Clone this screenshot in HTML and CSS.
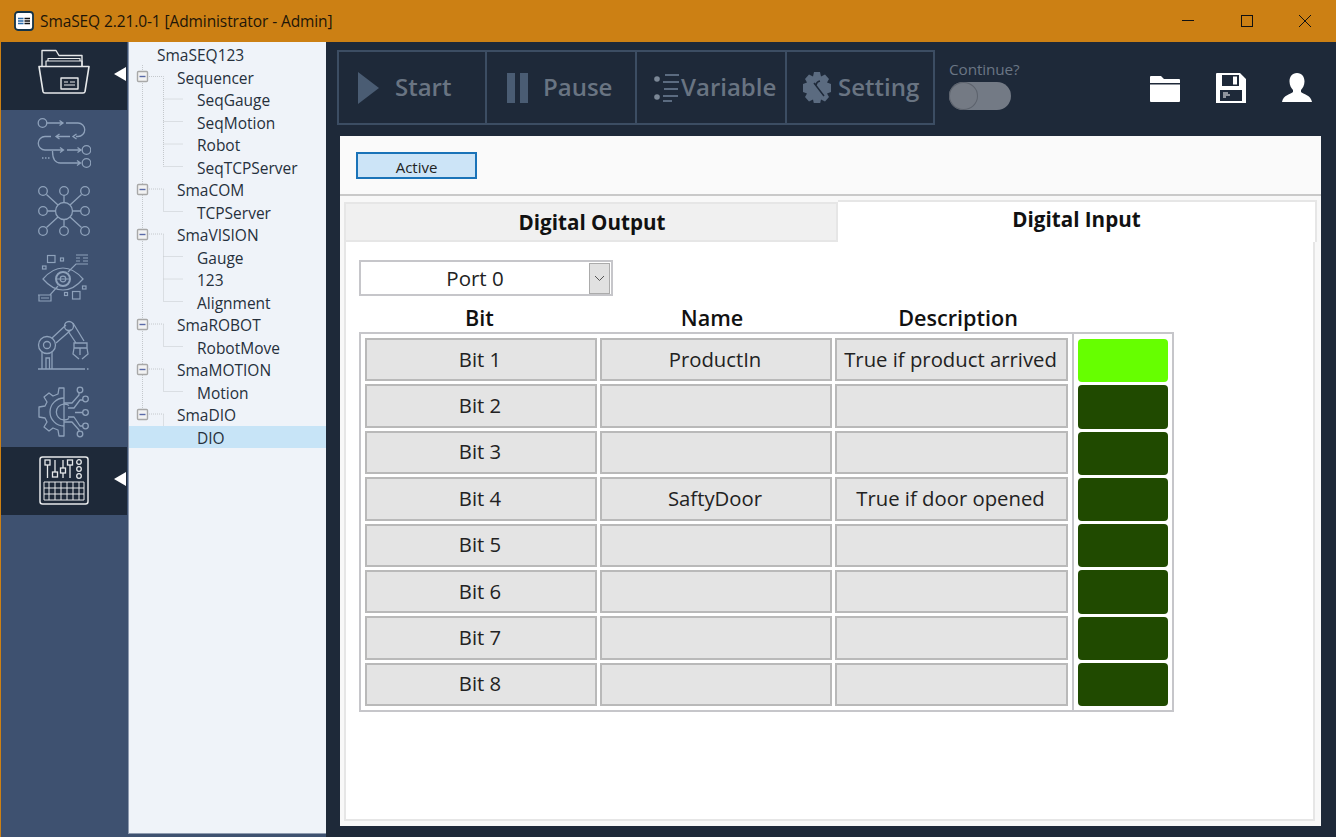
FILE: index.html
```html
<!DOCTYPE html>
<html lang="en">
<head>
<meta charset="utf-8">
<title>SmaSEQ</title>
<link rel="stylesheet" href="styles.css">
</head>
<body>
<div class="window">
  <header class="titlebar">
    <svg class="app-icon" viewBox="0 0 20 20" width="20" height="20"><rect x="1" y="1" width="18" height="18" rx="3" fill="#fff" stroke="#123349" stroke-width="1.8"/><path d="M4 7.500h5.500M4 10h5.500M4 12.500h5.500" stroke="#2a6aa8" stroke-width="1.400"/><path d="M10.500 7.500H16M10.500 10H16M10.500 12.500H16" stroke="#111" stroke-width="1.400"/></svg>
    <span class="title-text">SmaSEQ 2.21.0-1 [Administrator - Admin]</span>
    <div class="win-controls">
      <svg width="12" height="12" viewBox="0 0 12 12"><path d="M0 5.500h12" stroke="#111"/></svg>
      <svg width="12" height="12" viewBox="0 0 12 12"><rect x=".5" y=".5" width="11" height="11" fill="none" stroke="#111"/></svg>
      <svg width="12" height="12" viewBox="0 0 12 12"><path d="M0 0l12 12M12 0L0 12" stroke="#111"/></svg>
    </div>
  </header>
  <div class="body">
    <div class="left">
    <nav class="sidebar">
      <div class="side-item active">
        <svg class="side-icon" viewBox="0 0 54 54" width="54" height="54" fill="none" stroke="#e6e8ea" stroke-width="1.4" stroke-linejoin="round">
          <path d="M5 17V1.500h14l3 5h23v10.500"/>
          <path d="M2 17.500h50l-4 25a2 2 0 0 1-2 1.500H8a2 2 0 0 1-2-1.500z" stroke-width="1.6"/>
          <path d="M9 17v-5h36v5M11 12V9.500h32V12" stroke-width="1.2"/>
          <rect x="24" y="29" width="17" height="11" stroke-width="1.4"/>
          <path d="M27 33h4M33 33h5M27 36h11" stroke-width="1.2"/>
        </svg>
      </div>
      <div class="side-item">
        <svg class="side-icon" viewBox="0 -2 54 54" width="54" height="54" fill="none" stroke="#8ea1ba" stroke-width="1.3">
          <circle cx="5.500" cy="5" r="4.300"/>
          <path d="M10 5h16M22.500 2.500L26 5l-3.500 2.500M29 5h12a6.500 6.500 0 0 1 0 13.500h-2M39.500 16L36 18.500l3.500 2.500M33 18.500H19M22.500 16L19 18.500l3.500 2.500M14 18.500H8a6.500 6.500 0 0 0 0 13.500h18M23 29.500l3.500 2.500-3.500 2.500M30 32h13.500M40.500 29.500l3.500 2.500-3.500 2.500M15.500 33c0 8 3 12 8 12H43M40 42.500l3.500 2.500-3.500 2.500"/>
          <circle cx="49.500" cy="32" r="4.300"/>
          <circle cx="49.500" cy="45" r="4.300"/>
          <path d="M5 40h8" stroke-dasharray="1.500 1.500"/>
        </svg>
      </div>
      <div class="side-item">
        <svg class="side-icon" viewBox="0 0 54 54" width="54" height="54" fill="none" stroke="#8ea1ba" stroke-width="1.3">
          <circle cx="27" cy="27" r="8.500"/>
          <circle cx="6" cy="7" r="4.300"/><circle cx="27" cy="7" r="4.300"/><circle cx="48" cy="7" r="4.300"/>
          <circle cx="6" cy="27" r="4.300"/><circle cx="48" cy="27" r="4.300"/>
          <circle cx="6" cy="47" r="4.300"/><circle cx="27" cy="47" r="4.300"/><circle cx="48" cy="47" r="4.300"/>
          <path d="M9.500 10.500l11.500 10.500M27 11.500v7M44.500 10.500L33 21M10.500 27h8M35.500 27h8M9.500 43.500L21 33M27 35.500v7M44.500 43.500L33 33"/>
        </svg>
      </div>
      <div class="side-item">
        <svg class="side-icon" viewBox="37 251 54 54" width="54" height="54" fill="none" stroke="#8ea1ba" stroke-width="1.2">
          <rect x="47.500" y="255.500" width="7.500" height="7"/>
          <rect x="60.500" y="258" width="3" height="3"/>
          <rect x="42.500" y="266" width="3.500" height="3"/>
          <path d="M43 279c6-7 13-11 20-11s14 4 20 11c-6 7-13 11-20 11s-14-4-20-11z"/>
          <circle cx="63" cy="279" r="7" stroke-width="2"/>
          <circle cx="63" cy="279" r="2.800"/>
          <path d="M56 279h14M68 272l8-8h12M76 255h12M76 258h4M83 258h5M76 261h4M83 261h5M58 286l-8 9H38M39 295h12v6H39zM41 298h8"/>
          <rect x="72.500" y="291.500" width="7.500" height="7.500"/>
          <rect x="64.500" y="292.500" width="3" height="3"/>
          <rect x="82.500" y="286" width="3.500" height="3"/>
        </svg>
      </div>
      <div class="side-item">
        <svg class="side-icon" viewBox="37 319 54 54" width="54" height="54" fill="none" stroke="#8ea1ba" stroke-width="1.3">
          <circle cx="47" cy="345" r="8.500"/><circle cx="47" cy="345" r="3.500"/>
          <path d="M42 352v17M52 352v17M38 369h47M87 369h1.500M46 369v-11h3.500v11"/>
          <path d="M52 338l14-13M56 343l15-13"/>
          <circle cx="69" cy="326" r="4.500"/>
          <path d="M73 323l11 18M68 331l8 12M74 343h13v5H74zM74 348l-1 6 6 5M87 348l1 6-6 5M80 348v7"/>
        </svg>
      </div>
      <div class="side-item">
        <svg class="side-icon" viewBox="37 386 54 54" width="54" height="54" fill="none" stroke="#8ea1ba" stroke-width="1.3" stroke-linejoin="round">
          <path d="M64 388h-5l-1 6-5 2-4-3-5 4 3 5-2 4-6 1v10l6 1 2 4-3 5 5 4 4-3 5 2 1 6h5z"/>
          <path d="M64 398a14 14 0 0 0 0 28"/>
          <path d="M69 405.500a8 8 0 1 0 0 13"/>
          <path d="M64 403h8l7-8v-2.500M68 408h6l6-8h3M75 412.500h8M68 417h6l6 9h3M64 422h8l7 8v1"/>
          <circle cx="80" cy="390" r="2.800"/><circle cx="85.500" cy="399" r="2.800"/><circle cx="85.500" cy="412.500" r="2.800"/><circle cx="85.500" cy="426" r="2.800"/><circle cx="80" cy="434" r="2.800"/>
        </svg>
      </div>
      <div class="side-item active">
        <svg class="side-icon" viewBox="0 0 54 54" width="54" height="54" fill="none" stroke="#e6e8ea" stroke-width="1.3">
          <rect x="3" y="3" width="48" height="47" rx="2.500" stroke-width="1.5"/>
          <rect x="8" y="6" width="5" height="5"/><path d="M10.500 11v13"/>
          <path d="M18 6v12"/><rect x="15.500" y="18" width="5" height="5"/>
          <path d="M26 6v8M26 19v5"/><rect x="23.500" y="14" width="5" height="5"/>
          <path d="M33 11v13"/><rect x="30.500" y="6" width="5" height="5"/>
          <circle cx="42" cy="8" r="2.300"/><circle cx="42" cy="15" r="2.300"/><circle cx="42" cy="22" r="2.300"/>
          <path d="M7 28h40v18H7zM7 34h40M7 40h40M12 28v18M18 28v18M24 28v18M30 28v18M36 28v18M42 28v18" stroke-width="1"/>
        </svg>
      </div>
    </nav>
    <aside class="tree">
      <svg class="tree-lines" width="197" height="400" viewBox="129 42 197 400">
        <g fill="none" stroke="#c4c8cc" stroke-dasharray="1 1">
          <path d="M142.500 65V415M147 76.500h16.500V166.500M163.500 99h19.500M163.500 121.500h19.500M163.500 144h19.500M163.500 166.500h19.500"/>
          <path d="M147 189h16.500V211.500h19.500M147 234h16.500V301.500M163.500 256.500h19.500M163.500 279h19.500M163.500 301.500h19.500"/>
          <path d="M147 324h16.500V346.500h19.500M147 369h16.500V391.500h19.500M147 414h16.500V436.500h19.500"/>
        </g>
        <g class="exp">
          <rect x="137.500" y="71.500" width="10" height="10" rx="1"/><path d="M139.500 76.500h6"/>
          <rect x="137.500" y="184.500" width="10" height="10" rx="1"/><path d="M139.500 189.500h6"/>
          <rect x="137.500" y="229.500" width="10" height="10" rx="1"/><path d="M139.500 234.500h6"/>
          <rect x="137.500" y="319.500" width="10" height="10" rx="1"/><path d="M139.500 324.500h6"/>
          <rect x="137.500" y="364.500" width="10" height="10" rx="1"/><path d="M139.500 369.500h6"/>
          <rect x="137.500" y="409.500" width="10" height="10" rx="1"/><path d="M139.500 414.500h6"/>
        </g>
      </svg>
      <div class="node l0">SmaSEQ123</div>
      <div class="node l1">Sequencer</div>
      <div class="node l2">SeqGauge</div>
      <div class="node l2">SeqMotion</div>
      <div class="node l2">Robot</div>
      <div class="node l2">SeqTCPServer</div>
      <div class="node l1">SmaCOM</div>
      <div class="node l2">TCPServer</div>
      <div class="node l1">SmaVISION</div>
      <div class="node l2">Gauge</div>
      <div class="node l2">123</div>
      <div class="node l2">Alignment</div>
      <div class="node l1">SmaROBOT</div>
      <div class="node l2">RobotMove</div>
      <div class="node l1">SmaMOTION</div>
      <div class="node l2">Motion</div>
      <div class="node l1">SmaDIO</div>
      <div class="node l2 selected">DIO</div>
    </aside>
    </div>
    <main class="content">
      <div class="topbar">
        <div class="tools">
          <div class="tool t1">
            <svg width="22" height="32" viewBox="0 0 22 32"><path d="M0 0l21 16L0 32z" fill="#4a5c73"/></svg>
            <span>Start</span>
          </div>
          <div class="tool t2">
            <svg width="21" height="30" viewBox="0 0 21 30"><path d="M0 0h8v30H0zM13 0h8v30h-8z" fill="#4a5c73"/></svg>
            <span>Pause</span>
          </div>
          <div class="tool t3">
            <svg width="27" height="30" viewBox="0 0 27 30" fill="none" stroke="#5b6b80" stroke-width="2"><circle cx="3" cy="6" r="2.800" fill="#7b8796" stroke="none"/><circle cx="3" cy="24" r="2.800" fill="#7b8796" stroke="none"/><path d="M11 2h14M9 9h16M10 16h14M9 23h15M9 28h9"/></svg>
            <span>Variable</span>
          </div>
          <div class="tool t4">
            <svg width="28" height="31" viewBox="0 0 28 31"><path fill="#5b6b80" d="M11 0h6l1 4.500 4-2 4 4.500-2 3.500 4 1.500v8l-4 1.500 2 3.500-4 4.500-4-2-1 4.500h-6l-1-4.500-4 2-4-4.500 2-3.500-4-1.500v-8l4-1.500-2-3.500 4-4.500 4 2z"/><path d="M11 11l10 13M17 9a5 5 0 0 0-4 4" stroke="#1e2939" stroke-width="1.500" fill="none"/></svg>
            <span>Setting</span>
          </div>
        </div>
        <div class="continue">
          <span class="continue-label">Continue?</span>
          <div class="toggle"><div class="knob"></div></div>
        </div>
        <div class="actions">
          <svg width="30" height="30" viewBox="0 0 30 30"><path fill="#fff" d="M0 4a1 1 0 0 1 1-1h10l3 3h15a1 1 0 0 1 1 1v3H0zM0 11.500h30V28a1 1 0 0 1-1 1H1a1 1 0 0 1-1-1z"/></svg>
          <svg width="30" height="30" viewBox="0 0 30 30"><path fill="#fff" fill-rule="evenodd" d="M1 0h23l6 6v24H0V1a1 1 0 0 1 1-1zM6 2v11h17V2zM17 3.500h4v8h-4zM4 17v11h22V17z"/><path d="M7 20h5M7 22h7M7 24h3" stroke="#fff" stroke-width="1"/></svg>
          <svg width="30" height="30" viewBox="0 0 30 30"><path fill="#fff" d="M15 0c5 0 7.500 4 7.500 8.500 0 4-2 7-3.500 8.500v2c2 2 10 3 11 10H0c1-7 9-8 11-10v-2c-1.500-1.500-3.500-4.500-3.500-8.500C7.500 4 10 0 15 0z"/></svg>
        </div>
      </div>
      <section class="panel">
        <div class="panel-head"><button class="active-btn">Active</button></div>
        <div class="panel-body">
          <div class="tabs">
            <div class="tab">Digital Output</div>
            <div class="tab current">Digital Input</div>
          </div>
          <div class="tab-content">
            <div class="combo">
              <span class="combo-text">Port 0</span>
              <span class="combo-btn"><svg width="11" height="7" viewBox="0 0 11 7"><path d="M1 1l4.500 4.500L10 1" fill="none" stroke="#555"/></svg></span>
            </div>
            <div class="col-heads"><span>Bit</span><span>Name</span><span>Description</span></div>
            <div class="io-table">
              <div class="cells">
                <div class="cell">Bit 1</div><div class="cell">ProductIn</div><div class="cell">True if product arrived</div>
                <div class="cell">Bit 2</div><div class="cell"></div><div class="cell"></div>
                <div class="cell">Bit 3</div><div class="cell"></div><div class="cell"></div>
                <div class="cell">Bit 4</div><div class="cell">SaftyDoor</div><div class="cell">True if door opened</div>
                <div class="cell">Bit 5</div><div class="cell"></div><div class="cell"></div>
                <div class="cell">Bit 6</div><div class="cell"></div><div class="cell"></div>
                <div class="cell">Bit 7</div><div class="cell"></div><div class="cell"></div>
                <div class="cell">Bit 8</div><div class="cell"></div><div class="cell"></div>
              </div>
              <div class="leds">
                <div class="led on"></div><div class="led"></div><div class="led"></div><div class="led"></div>
                <div class="led"></div><div class="led"></div><div class="led"></div><div class="led"></div>
              </div>
            </div>
          </div>
        </div>
      </section>
    </main>
  </div>
</div>
</body>
</html>
```
FILE: styles.css
```css
* { box-sizing: border-box; }
html, body { margin: 0; height: 100%; }
body { font-family: "Open Sans", "Noto Sans", sans-serif; color: #1c1c1c; overflow: hidden; }
.window { width: 1336px; height: 837px; display: flex; flex-direction: column; background: #1e2939; }

.titlebar { height: 42px; flex: none; background: #cc8014; display: flex; align-items: center; padding-left: 14px; }
.app-icon { margin-right: 6px; }
.title-text { font-size: 15.5px; color: #1d1508; white-space: nowrap; letter-spacing: -.1px; }
.win-controls { margin-left: auto; display: flex; gap: 46.5px; padding-right: 25px; }

.body { flex: 1; display: flex; min-height: 0; }
.left { width: 326px; flex: none; display: flex; background: #3e5170; border-left: 1px solid #cc8014; }

.sidebar { width: 126px; flex: none; }
.side-item { height: 67.5px; display: flex; align-items: center; justify-content: center; position: relative; }
.side-item.active { background: #1e2939; }
.side-item.active::after { content: ""; position: absolute; right: 1px; top: 50%; margin-top: -9px; border-style: solid; border-width: 7.500px 12px 7.500px 0; border-color: transparent #fff transparent transparent; }

.tree { width: 198px; flex: none; margin: 0 0 3px 1px; background: #eff3f9; border-left: 1px solid #8e9bb0; border-bottom: 1px solid #8e9bb0; padding-top: 1px; font-size: 15.5px; color: #26303c; position: relative; }
.tree-lines { position: absolute; left: 0; top: 0; }
.exp rect { fill: #f2f2f2; stroke: #a8a8a8; stroke-width: 1.400; }
.exp path { stroke: #5a6aa8; fill: none; stroke-width: 1.400; }
.node { height: 22.5px; line-height: 24px; white-space: nowrap; position: relative; }
.l0 { padding-left: 28px; }
.l1 { padding-left: 48px; }
.l2 { padding-left: 68px; }
.selected { background: #c7e4f7; }

.content { flex: 1; min-width: 0; display: flex; flex-direction: column; padding: 0 15px 11px 14px; }

.topbar { height: 94px; flex: none; display: flex; }
.tools { display: flex; height: 75px; margin-top: 8px; margin-left: -3px; border: 2px solid #3c4d63; width: 598px; }
.tool { flex: none; width: 150px; display: flex; align-items: center; color: #697482; font-size: 24px; font-weight: 600; border-right: 2px solid #3c4d63; white-space: nowrap; }
.tool span { padding-bottom: 3px; }
.t1 { width: 148px; padding-left: 19px; gap: 15px; }
.t2 { padding-left: 20px; gap: 15px; }
.t3 { padding-left: 17px; gap: 0; }
.t4 { width: 146px; padding-left: 16px; gap: 7px; border-right: 0; }

.continue { margin-left: 14px; padding-top: 18px; display: flex; flex-direction: column; }
.continue-label { font-size: 15.300px; line-height: 18px; color: #6b7685; letter-spacing: -.1px; }
.toggle { margin-top: 4px; width: 62px; height: 28px; border-radius: 14px; background: #737a85; }
.knob { width: 29px; height: 28px; border-radius: 50%; background: #747a84; border: 1px solid #5c626c; }

.actions { margin-left: auto; display: flex; gap: 36px; padding-top: 31px; padding-right: 9px; }
.actions svg { display: block; }

.panel { flex: 1; min-height: 0; display: flex; flex-direction: column; background: #f8f8f8; }
.panel-head { height: 60px; flex: none; padding: 16px 0 0 16px; background: #fafafa; border-bottom: 2px solid #c9c9c9; }
.active-btn { display: block; width: 121px; height: 27px; padding: 3px 0 0; background: #cce4f7; border: 2px solid #1a73b8; font: 15px "Open Sans", sans-serif; color: #222; }

.panel-body { flex: 1; min-height: 0; padding: 4px 4px 5px 4px; display: flex; flex-direction: column; }
.tabs { height: 42px; flex: none; display: flex; }
.tab { width: 494px; margin-top: 2px; padding-left: 2px; background: #f0f0f0; border: 2px solid #e6e6e6; display: flex; align-items: center; justify-content: center; font-size: 20.600px; font-weight: 700; color: #111; }
.tab.current { flex: 1; margin-top: 0; padding-left: 0; background: #fff; border-width: 2px 2px 0 0; padding-bottom: 6px; }
.tab-content { flex: 1; min-height: 0; margin-right: 2px; background: #fff; border: 2px solid #e6e6e6; border-top: 0; padding: 18px 0 0 13px; }
.combo { width: 254px; height: 36px; border: 2px solid #c6c6ca; display: flex; align-items: center; padding-right: 1px; }
.combo-text { flex: 1; text-align: center; font-size: 20.500px; color: #222; }
.combo-btn { width: 21px; height: 31px; background: #e1e1e1; border: 1px solid #ababab; display: flex; align-items: center; justify-content: center; }
.col-heads { height: 36px; padding-top: 6px; display: grid; grid-template-columns: 241px 224px 268px; align-items: center; font-size: 21.600px; font-weight: 600; color: #111; text-align: center; }
.io-table { width: 815px; height: 380px; border: 2px solid #c6c6ca; display: flex; }
.cells { width: 713px; padding: 4px 0 4px 4px; border-right: 2px solid #c6c6ca; display: grid; grid-template-columns: 232px 232px 233px; grid-template-rows: repeat(8, 1fr); gap: 3px; }
.cell { background: #e4e4e4; border: 2px solid #b9b9b9; padding: 0 2px 2px 0; display: flex; align-items: center; justify-content: center; font-size: 20.300px; color: #222; white-space: nowrap; }
.leds { flex: 1; padding: 5px 4px 4px 4px; display: grid; grid-template-rows: repeat(8, 1fr); gap: 3px; }
.led { background: #204a00; border-radius: 4px; }
.led.on { background: #66ff00; }
```
